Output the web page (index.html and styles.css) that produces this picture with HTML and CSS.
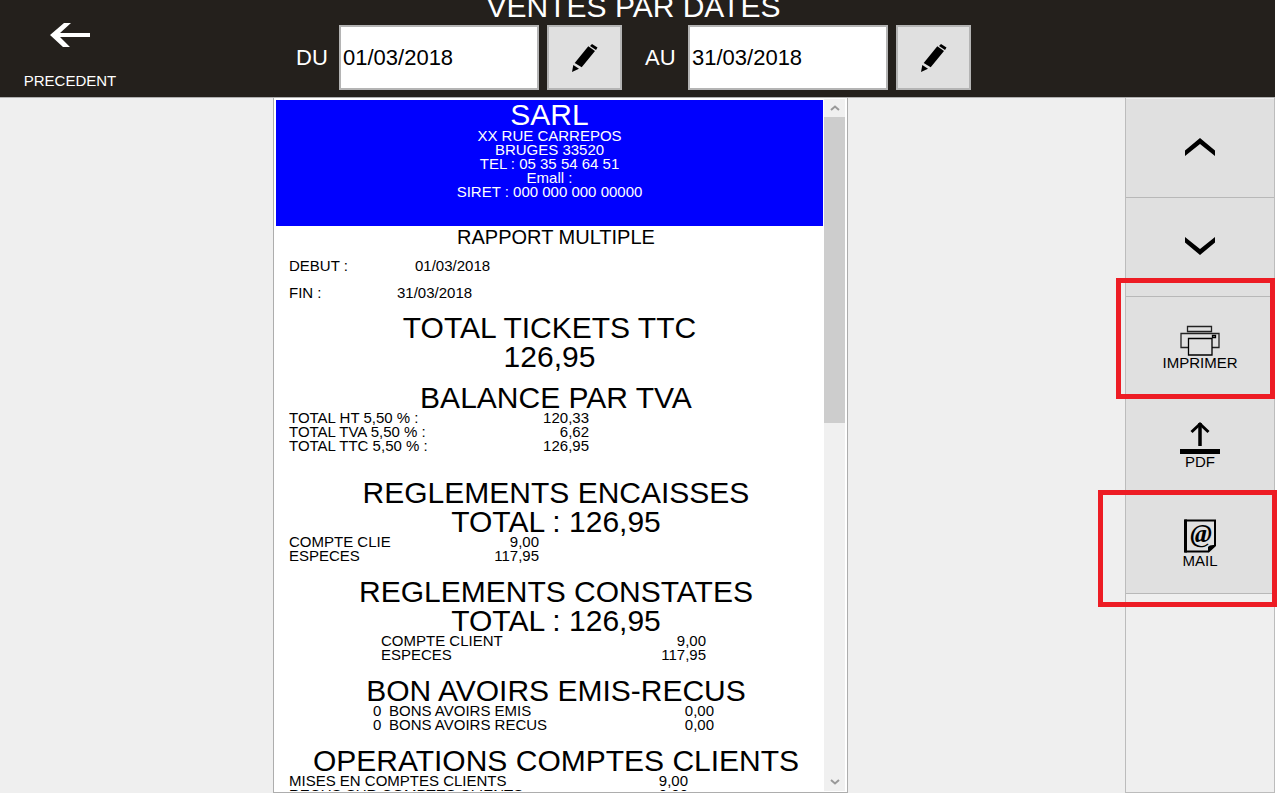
FILE: index.html
```html
<!DOCTYPE html>
<html lang="fr">
<head>
<meta charset="utf-8">
<title>Ventes par dates</title>
<link rel="stylesheet" href="styles.css">
</head>
<body class="app">
<header class="topbar">
  <button class="back" type="button">
    <svg class="back-icon" width="40" height="24" viewBox="0 0 40 24" aria-hidden="true"><path d="M0 12 14 0h7L10 10h30v4H10l10 10h-7z" fill="#fff"/></svg>
    <span>PRECEDENT</span>
  </button>
  <div class="topbar-center">
    <h1 class="title">VENTES PAR DATES</h1>
    <form class="dates">
      <div class="date-group">
        <label class="date-label" for="from">DU</label>
        <input class="date-input" id="from" type="text" value="01/03/2018">
        <button class="edit" type="button" aria-label="Modifier la date de début">
          <svg width="26" height="28" viewBox="0 0 26 28" aria-hidden="true"><path d="M20 0l5.500 3.500L24 6l-6-4zM16.300 2.300 23 7 9.700 23.300l-7-4.300zM1.300 21 7 24.700 0 28z"/></svg>
        </button>
      </div>
      <div class="date-group">
        <label class="date-label" for="to">AU</label>
        <input class="date-input" id="to" type="text" value="31/03/2018">
        <button class="edit" type="button" aria-label="Modifier la date de fin">
          <svg width="26" height="28" viewBox="0 0 26 28" aria-hidden="true"><path d="M20 0l5.500 3.500L24 6l-6-4zM16.300 2.300 23 7 9.700 23.300l-7-4.300zM1.300 21 7 24.700 0 28z"/></svg>
        </button>
      </div>
    </form>
  </div>
</header>
<div class="workspace">
  <main class="stage">
    <div class="viewer">
      <article class="report">
        <header class="company">
          <h2 class="heading">SARL</h2>
          <p class="line">XX RUE CARREPOS</p>
          <p class="line">BRUGES 33520</p>
          <p class="line">TEL : 05 35 54 64 51</p>
          <p class="line">Emall :</p>
          <p class="line">SIRET : 000 000 000 00000</p>
        </header>
        <section class="period">
          <h2 class="subheading">RAPPORT MULTIPLE</h2>
          <dl class="period-row period-start"><dt>DEBUT :</dt><dd>01/03/2018</dd></dl>
          <dl class="period-row period-end"><dt>FIN :</dt><dd>31/03/2018</dd></dl>
        </section>
        <section class="grand-total">
          <h2 class="heading">TOTAL TICKETS TTC</h2>
          <p class="heading">126,95</p>
        </section>
        <section class="block block-tall">
          <h2 class="heading">BALANCE PAR TVA</h2>
          <table class="rows rows-tva">
            <tr><th>TOTAL HT 5,50 % :</th><td>120,33</td></tr>
            <tr><th>TOTAL TVA 5,50 % :</th><td>6,62</td></tr>
            <tr><th>TOTAL TTC 5,50 % :</th><td>126,95</td></tr>
          </table>
        </section>
        <section class="block">
          <h2 class="heading">REGLEMENTS ENCAISSES</h2>
          <p class="heading">TOTAL : 126,95</p>
          <table class="rows rows-cashed">
            <tr><th>COMPTE CLIE</th><td>9,00</td></tr>
            <tr><th>ESPECES</th><td>117,95</td></tr>
          </table>
        </section>
        <section class="block">
          <h2 class="heading">REGLEMENTS CONSTATES</h2>
          <p class="heading">TOTAL : 126,95</p>
          <table class="rows rows-recorded">
            <tr><th>COMPTE CLIENT</th><td>9,00</td></tr>
            <tr><th>ESPECES</th><td>117,95</td></tr>
          </table>
        </section>
        <section class="block">
          <h2 class="heading">BON AVOIRS EMIS-RECUS</h2>
          <table class="rows rows-vouchers">
            <tr><td class="count">0</td><th>BONS AVOIRS EMIS</th><td>0,00</td></tr>
            <tr><td class="count">0</td><th>BONS AVOIRS RECUS</th><td>0,00</td></tr>
          </table>
        </section>
        <section class="block">
          <h2 class="heading">OPERATIONS COMPTES CLIENTS</h2>
          <table class="rows rows-accounts">
            <tr><th>MISES EN COMPTES CLIENTS</th><td>9,00</td></tr>
            <tr><th>RECUS SUR COMPTES CLIENTS</th><td>0,00</td></tr>
          </table>
        </section>
      </article>
      <div class="scrollbar">
        <button class="scroll-button" type="button" aria-label="Défiler vers le haut"><svg width="10" height="6" viewBox="0 0 10 6"><path d="M1 5l4-3.500L9 5" fill="none" stroke="#999" stroke-width="2"/></svg></button>
        <div class="scroll-track"><div class="scroll-thumb"></div></div>
        <button class="scroll-button" type="button" aria-label="Défiler vers le bas"><svg width="10" height="6" viewBox="0 0 10 6"><path d="M1 1l4 3.500L9 1" fill="none" stroke="#999" stroke-width="2"/></svg></button>
      </div>
    </div>
  </main>
  <nav class="sidebar">
    <button class="action" type="button" aria-label="Monter"><svg width="30" height="18" viewBox="0 0 30 18"><path d="M0 12.500 15 0l15 12.500V18L15 6 0 18z"/></svg></button>
    <button class="action" type="button" aria-label="Descendre"><svg width="30" height="18" viewBox="0 0 30 18"><path d="M0 0l15 12L30 0v5.500L15 18 0 5.500z"/></svg></button>
    <button class="action" type="button">
      <svg width="40" height="36" viewBox="0 0 40 36" aria-hidden="true"><g fill="#e0e0e0" stroke="#222" stroke-width="1.300"><path d="M7.500 6.500h24v5h-24zM1 13.500h38v14H1z"/><path d="M8.500 18.500h23.500v16.500H8.500z" stroke="#000"/><path d="M32.500 15.500h3v2h-3z" stroke="#000"/></g></svg>
      <span>IMPRIMER</span>
    </button>
    <button class="action" type="button">
      <svg width="40" height="36" viewBox="0 0 40 36" aria-hidden="true"><path d="M0 30h40v5H0z"/><path d="M20 4v23" stroke="#000" stroke-width="3.500"/><path d="M11.500 13 20 5l8.500 8" fill="none" stroke="#000" stroke-width="3"/></svg>
      <span>PDF</span>
    </button>
    <button class="action" type="button">
      <svg width="40" height="36" viewBox="0 0 40 36" aria-hidden="true"><path d="M5.500 2.500h29.500v25l-6.500 6H5.500z" fill="#e0e0e0" stroke="#000" stroke-width="2"/><path d="M4 1.500h3v33H4zM35 27l-7 7.500V29q1.500-2.500 7-2z"/><text class="at" x="21" y="24" text-anchor="middle">@</text></svg>
      <span>MAIL</span>
    </button>
    <div class="highlight highlight-print"></div>
    <div class="highlight highlight-mail"></div>
  </nav>
</div>
</body>
</html>
```
FILE: styles.css
```css
* {
  box-sizing: border-box;
}

.app {
  margin: 0;
  height: 100vh;
  display: flex;
  flex-direction: column;
  padding-right: 4px;
  overflow: hidden;
  background: #fff;
  color: #000;
  font: 15px/14px "Liberation Sans", Arial, sans-serif;
}

button {
  font: inherit;
  color: inherit;
  border: 0;
  padding: 0;
  background: none;
}

h1, h2, p, dl, dd {
  margin: 0;
  font-weight: 400;
}

.topbar {
  flex: 0 0 98px;
  display: grid;
  grid-template-columns: 140px 1fr 148px;
  overflow: hidden;
  background: #24201c;
  color: #fff;
  border-bottom: 1px solid #b0b0b0;
}

.back {
  display: flex;
  flex-direction: column;
  align-items: center;
  justify-content: flex-end;
  gap: 27px;
  padding-bottom: 9px;
}

.topbar-center {
  display: flex;
  flex-direction: column;
  align-items: center;
  justify-content: flex-end;
  min-height: 0;
  padding-bottom: 7px;
}

.title {
  margin-bottom: 3px;
  font-size: 30px;
  line-height: 30px;
  white-space: nowrap;
}

.dates {
  display: flex;
  gap: 23px;
}

.date-group {
  display: flex;
  align-items: center;
  gap: 8px;
}

.date-label {
  width: 35px;
  font-size: 22px;
  line-height: 24px;
}

.date-input {
  width: 200px;
  height: 65px;
  padding: 0 2px;
  border: 2px solid #b4b4b4;
  border-radius: 0;
  background: #fff;
  color: #000;
  font: 22px/24px "Liberation Sans", Arial, sans-serif;
}

.edit {
  display: flex;
  align-items: center;
  justify-content: center;
  width: 75px;
  height: 65px;
  border: 2px solid #b4b4b4;
  background: #e0e0e0;
}

.workspace {
  flex: 1;
  display: flex;
  min-height: 0;
  background: #efefef;
}

.stage {
  flex: 1;
  display: flex;
  justify-content: center;
  padding-right: 4px;
}

.viewer {
  display: flex;
  width: 575px;
  padding: 1px 2px;
  border: 1px solid #adadad;
  border-top: 0;
  background: #fff;
}

.report {
  flex: 1;
  padding-top: 1px;
  overflow: hidden;
}

.company {
  padding-bottom: 27px;
  background: #00f;
  color: #fff;
  text-align: center;
}

.heading {
  font-size: 30px;
  line-height: 29px;
  text-align: center;
  white-space: nowrap;
}

.subheading {
  margin-bottom: 4px;
  font-size: 20px;
  line-height: 22px;
  text-align: center;
}

.period,
.block {
  padding-left: 13px;
}

.period {
  margin-bottom: 7px;
}

.period-row {
  display: grid;
  line-height: 27px;
}

.period-start {
  grid-template-columns: 126px 1fr;
}

.period-end {
  grid-template-columns: 108px 1fr;
}

.grand-total {
  margin-bottom: 12px;
}

.block {
  margin-bottom: 14px;
}

.block-tall {
  margin-bottom: 25px;
}

.rows {
  margin-top: -1px;
  border-collapse: collapse;
  white-space: nowrap;
}

.rows th,
.rows td {
  padding: 0;
  font-weight: 400;
  text-align: left;
}

.rows td:last-child {
  text-align: right;
}

.rows-tva {
  width: 300px;
}

.rows-cashed {
  width: 250px;
}

.rows-recorded {
  width: 325px;
  margin-left: 92px;
}

.rows-vouchers {
  width: 341px;
  margin-left: 84px;
}

.rows .count {
  width: 16px;
}

.rows-accounts {
  width: 399px;
}

.scrollbar {
  display: flex;
  flex-direction: column;
  width: 21px;
  margin-left: 1px;
  background: #f0f0f0;
}

.scroll-button {
  display: flex;
  align-items: center;
  justify-content: center;
  height: 18px;
}

.scroll-track {
  flex: 1;
}

.scroll-thumb {
  height: calc(100% * 7 / 15);
  background: #cdcdcd;
}

.sidebar {
  position: relative;
  display: flex;
  flex-direction: column;
  width: 150px;
  padding-top: 1px;
  border: 1px solid #bcbcbc;
  border-top: 0;
}

.action {
  display: flex;
  flex-direction: column;
  align-items: center;
  justify-content: center;
  height: 99px;
  padding-bottom: 2px;
  border-bottom: 1px solid #b8b8b8;
  background: #e0e0e0;
}

.at {
  font: italic bold 26px "Liberation Serif", serif;
}

.highlight {
  position: absolute;
  border: 5px solid #ed1c24;
  pointer-events: none;
}

.highlight-print {
  top: 180px;
  left: -10px;
  right: -1px;
  height: 121px;
}

.highlight-mail {
  top: 392px;
  left: -28px;
  right: -3px;
  height: 117px;
}
```
